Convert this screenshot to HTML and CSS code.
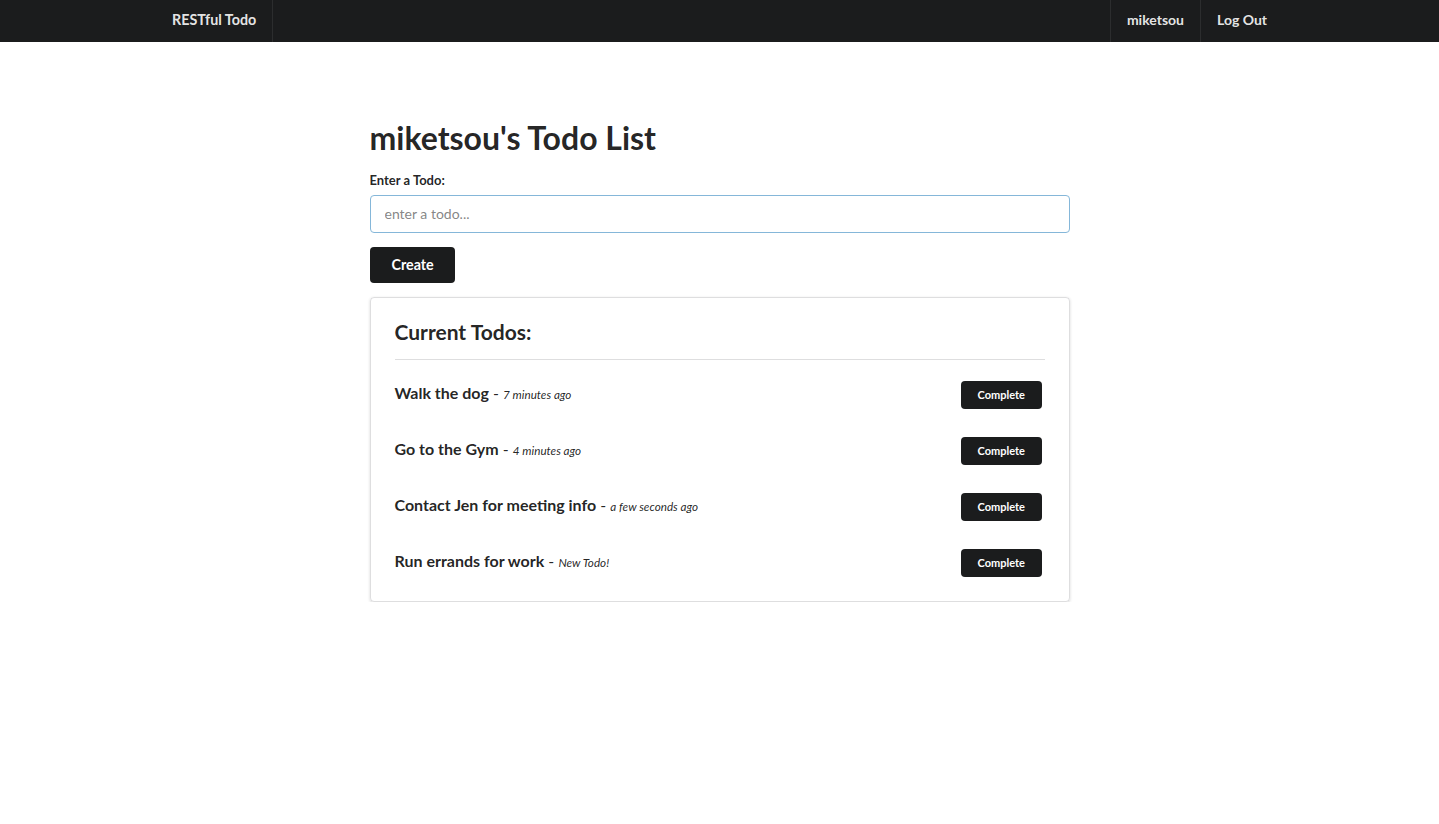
FILE: index.html
```html
<!DOCTYPE html>
<html>
<head>
<meta charset="utf-8">
<title>RESTful Todo</title>
<link rel="stylesheet" href="styles.css">
</head>
<body>
<nav class="topbar">
  <div class="topbar-inner">
    <a class="nav-item brand">RESTful Todo</a>
    <div class="nav-right">
      <a class="nav-item sep-left">miketsou</a>
      <a class="nav-item sep-left">Log Out</a>
    </div>
  </div>
</nav>
<main class="page">
  <h1 class="title">miketsou's Todo List</h1>
  <form class="todo-form">
    <label class="field-label">Enter a Todo:</label>
    <input class="todo-input" type="text" placeholder="enter a todo...">
    <button type="button" class="btn-create">Create</button>
  </form>
  <section class="segment">
    <h2 class="seg-title">Current Todos:</h2>
    <ul class="todo-list">
      <li class="todo-row"><span class="todo-text"><b>Walk the dog</b> - <i>7 minutes ago</i></span><button class="btn-complete">Complete</button></li>
      <li class="todo-row"><span class="todo-text"><b>Go to the Gym</b> - <i>4 minutes ago</i></span><button class="btn-complete">Complete</button></li>
      <li class="todo-row"><span class="todo-text"><b>Contact Jen for meeting info</b> - <i>a few seconds ago</i></span><button class="btn-complete">Complete</button></li>
      <li class="todo-row"><span class="todo-text"><b>Run errands for work</b> - <i>New Todo!</i></span><button class="btn-complete">Complete</button></li>
    </ul>
  </section>
</main>
</body>
</html>
```

FILE: styles.css
```css
* { box-sizing: border-box; }
html, body { margin: 0; padding: 0; }
body {
  font-family: Lato, "Helvetica Neue", Arial, sans-serif;
  font-size: 14px;
  color: rgba(0,0,0,.87);
  background: #fff;
}
.topbar {
  background: #1b1c1d;
  height: 42px;
}
.topbar-inner {
  width: 1127px;
  margin: 0 auto;
  height: 42px;
  display: flex;
  justify-content: space-between;
}
.nav-right { display: flex; }
.nav-item {
  display: flex;
  align-items: center;
  padding: 0 16px 3px;
  height: 42px;
  color: rgba(255,255,255,.9);
  font-size: 14px;
  font-weight: 700;
  text-decoration: none;
}
.brand {
  border-right: 1px solid rgba(255,255,255,.08);
  font-size: 14.3px;
}
.sep-left { border-left: 1px solid rgba(255,255,255,.08); }
.page {
  width: 700px;
  margin: 75px auto 0;
}
.title {
  margin: 0;
  font-size: 32px;
  line-height: 1.28571;
  font-weight: 700;
  color: rgba(0,0,0,.87);
}
.todo-form {
  margin-top: 14px;
  display: flex;
  flex-direction: column;
  align-items: flex-start;
}
.field-label {
  font-size: 13px;
  font-weight: 700;
  line-height: 1.28571;
  margin-bottom: 6px;
}
.todo-input {
  width: 100%;
  height: 38px;
  border: 1px solid #85b7d9;
  border-radius: 4px;
  padding: 0 14px;
  font-family: inherit;
  font-size: 14px;
  color: rgba(0,0,0,.8);
  outline: none;
}
.todo-input::placeholder { color: rgba(115,115,115,.87); }
.btn-create {
  margin-top: 14px;
  background: #1b1c1d;
  color: #fff;
  border: none;
  border-radius: 4px;
  height: 36px;
  padding: 0 21px 0 22px;
  font-family: inherit;
  font-size: 14.3px;
  font-weight: 700;
}
.segment {
  margin-top: 14px;
  border: 1px solid rgba(34,36,38,.15);
  border-radius: 4px;
  box-shadow: 0 1px 3px 0 rgba(34,36,38,.18);
  padding: 20px 24px 24px;
}
.seg-title {
  margin: 0;
  font-size: 21px;
  line-height: 27px;
  font-weight: 700;
  padding-bottom: 14px;
  border-bottom: 1px solid rgba(34,36,38,.15);
}
.todo-list {
  list-style: none;
  margin: 21px 0 0;
  padding: 0;
  display: flex;
  flex-direction: column;
  gap: 28px;
}
.todo-row {
  display: flex;
  align-items: center;
  justify-content: space-between;
  height: 28px;
}
.todo-text {
  font-size: 16px;
  margin-bottom: 5px;
}
.todo-text b { font-weight: 700; }
.todo-text i { font-size: 11.7px; }
.btn-complete {
  margin-right: 3px;
  background: #1b1c1d;
  color: #fff;
  border: none;
  border-radius: 4px;
  height: 28px;
  padding: 0 16.5px;
  font-family: inherit;
  font-size: 11px;
  font-weight: 700;
}
```
